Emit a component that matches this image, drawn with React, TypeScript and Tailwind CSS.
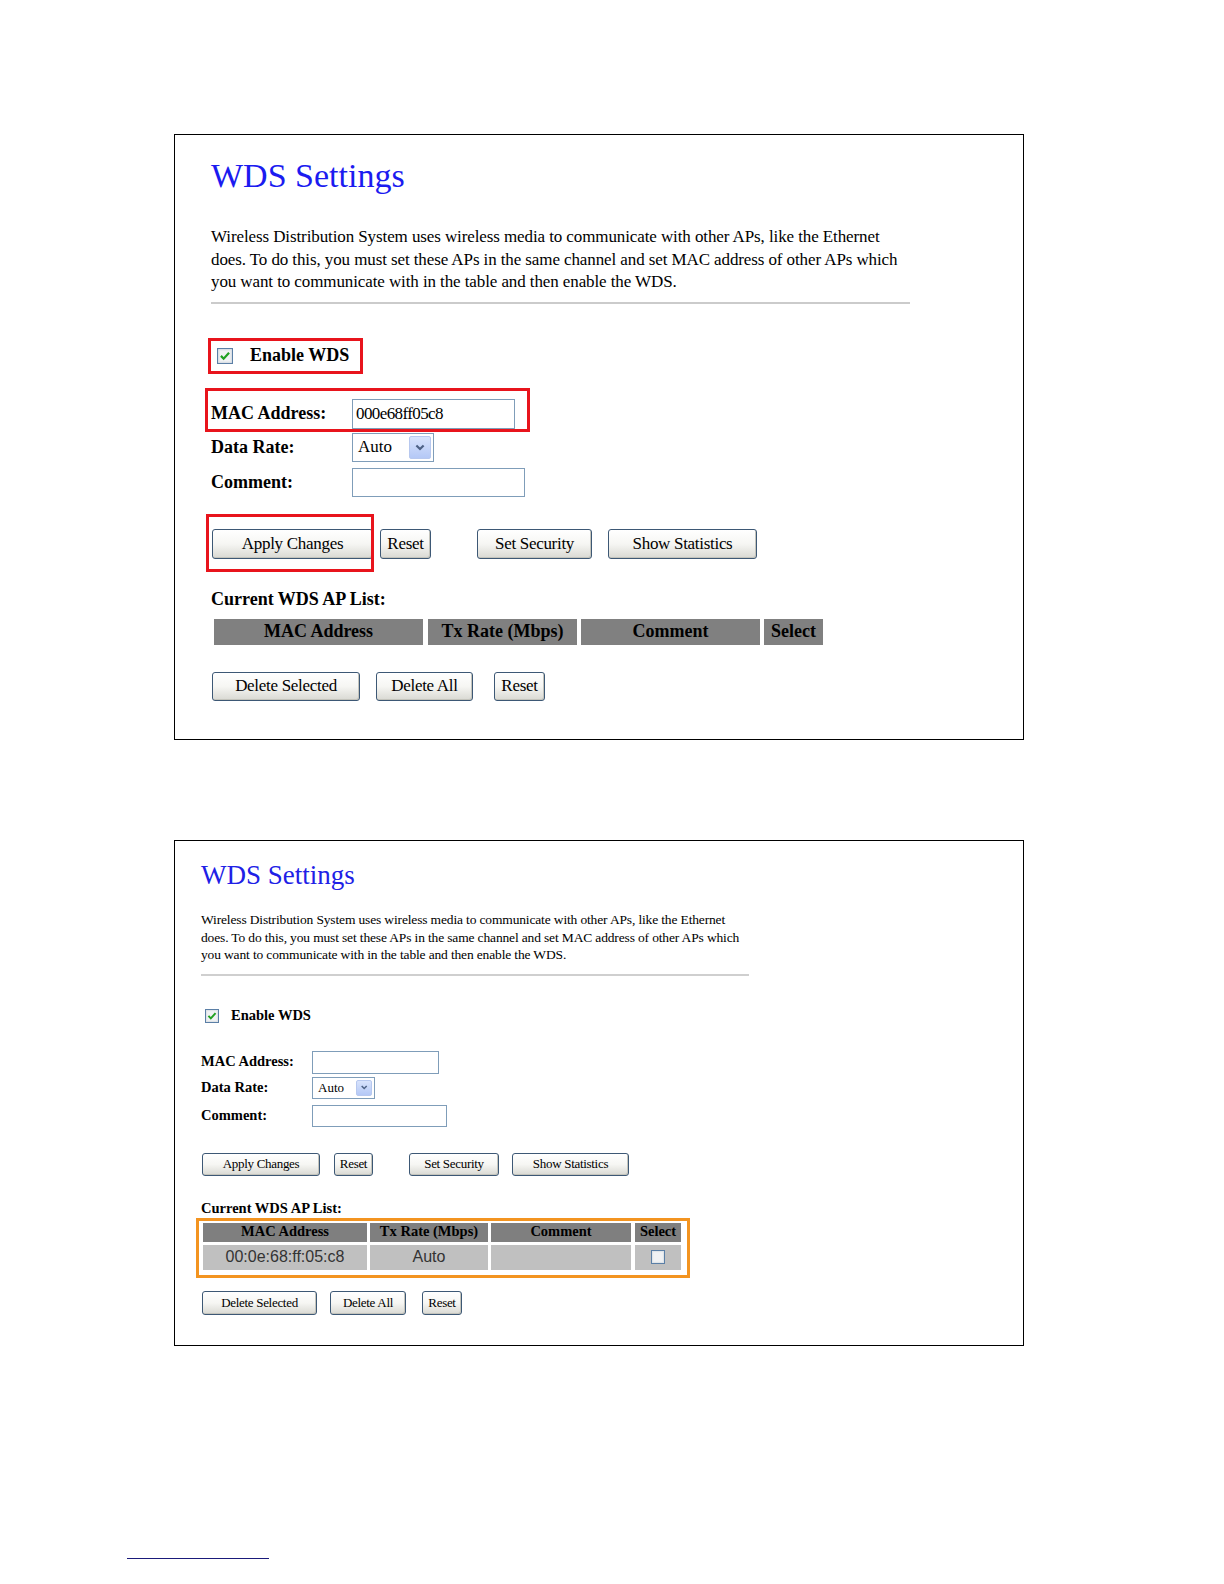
import React from "react";

const serif = "font-['Liberation_Serif','Times_New_Roman',serif]";
const sans = "font-['Liberation_Sans',Arial,sans-serif]";

function Btn({ label, className }: { label: string; className: string }) {
    return (
        <button
            className={`shrink-0 flex items-center justify-center rounded-[3px] border border-[#3d5875] bg-linear-to-b from-white via-[#f6f6f3] to-[#d9d9d3] text-black shadow-[inset_-1px_-1px_0_#c4c4bc] ${className}`}
        >
            {label}
        </button>
    );
}

function Check({ checked, className }: { checked?: boolean; className: string }) {
    return (
        <svg viewBox="0 0 13 13" className={`shrink-0 ${className}`}>
            <rect x="0.5" y="0.5" width="12" height="12" fill="#f1f2f4" stroke="#5b7fa6" />
            <rect x="1.5" y="1.5" width="10" height="10" fill="none" stroke="#dfe3e8" />
            {checked && (
                <path d="M3.2 6.4 L5.4 8.7 L9.8 3.9" fill="none" stroke="#21a121" strokeWidth="1.8" />
            )}
        </svg>
    );
}

function Select({ className, arrow, text }: { className: string; arrow: string; text: string }) {
    return (
        <div className={`flex items-stretch border border-[#7f9db9] bg-white p-[2px] ${className}`}>
            <span className={`flex-1 flex items-center pl-[3px] ${text}`}>Auto</span>
            <span className={`flex items-center justify-center rounded-[2px] border border-[#b7c8ef] bg-linear-to-b from-[#d8e3fc] to-[#b4c8f6] ${arrow}`}>
                <svg viewBox="0 0 10 10" className="w-[60%] h-[60%]">
                    <path d="M2 3.5 L5 6.5 L8 3.5" fill="none" stroke="#4d6185" strokeWidth="1.8" />
                </svg>
            </span>
        </div>
    );
}

// red / orange annotation frames drawn over the screenshot
function Mark({ className }: { className: string }) {
    return <span className={`pointer-events-none absolute ${className}`} />;
}

export default function App() {
    return (
        <div className={`min-h-[1584px] w-[1224px] bg-white overflow-hidden ${serif}`}>
            {/* ── Panel 1 (annotated) ─────────────────────────────── */}
            <div className="ml-[174px] mt-[134px] w-[850px] h-[606px] border border-black pl-[36px] pt-px">
                <h1 className="mt-[20px] text-[34px] leading-[40px] text-[#1b1bf0]">WDS Settings</h1>
                <p className="mt-[30px] text-[17px] leading-[22.5px] tracking-[-0.1px] text-black whitespace-nowrap">
                    Wireless Distribution System uses wireless media to communicate with other APs, like the Ethernet
                    <br />
                    does. To do this, you must set these APs in the same channel and set MAC address of other APs which
                    <br />
                    you want to communicate with in the table and then enable the WDS.
                </p>
                <div className="mt-[8px] w-[699px] h-[2px] bg-[#cbcbcb]" />

                <div className="relative mt-[42px] h-[20px] w-fit flex items-center">
                    <Check checked className="ml-[6px] w-[16px] h-[16px]" />
                    <span className="ml-[17px] text-[18px] font-bold">Enable WDS</span>
                    <Mark className="-left-[3px] -top-[8px] w-[155px] h-[36px] border-[3px] border-[#e8141c]" />
                </div>

                <div className="relative mt-[33px] h-[30px] w-fit flex items-center">
                    <span className="w-[141px] text-[18px] font-bold">MAC Address:</span>
                    <div className="w-[163px] h-[30px] border border-[#7f9db9] flex items-center pl-[3px] text-[17px] tracking-[-0.6px]">
                        000e68ff05c8
                    </div>
                    <Mark className="-left-[6px] -top-[11px] w-[325px] h-[44px] border-[3px] border-[#e8141c]" />
                </div>
                <div className="mt-[4px] h-[29px] flex items-center">
                    <span className="w-[141px] text-[18px] font-bold">Data Rate:</span>
                    <Select className="w-[82px] h-[29px]" arrow="w-[22px]" text="text-[17px]" />
                </div>
                <div className="mt-[6px] h-[29px] flex items-center">
                    <span className="w-[141px] text-[18px] font-bold">Comment:</span>
                    <div className="w-[173px] h-[29px] border border-[#7f9db9]" />
                </div>

                <div className="mt-[32px] ml-px h-[30px] flex items-center text-[17px] tracking-[-0.3px]">
                    <div className="relative">
                        <Btn label="Apply Changes" className="w-[161px] h-[30px]" />
                        <Mark className="-left-[6px] -top-[15px] w-[168px] h-[58px] border-[3px] border-[#e8141c]" />
                    </div>
                    <Btn label="Reset" className="ml-[7px] w-[51px] h-[30px]" />
                    <Btn label="Set Security" className="ml-[46px] w-[115px] h-[30px]" />
                    <Btn label="Show Statistics" className="ml-[16px] w-[149px] h-[30px]" />
                </div>

                <div className="mt-[29px] h-[22px] leading-[22px] text-[18px] font-bold">Current WDS AP List:</div>

                <div className="mt-[9px] ml-[3px] h-[26px] flex gap-[4px] text-[18px] font-bold">
                    <div className="w-[209px] bg-[#808080] flex items-center justify-center">MAC Address</div>
                    <div className="ml-px w-[149px] bg-[#808080] flex items-center justify-center">Tx Rate (Mbps)</div>
                    <div className="w-[179px] bg-[#808080] flex items-center justify-center">Comment</div>
                    <div className="w-[59px] bg-[#808080] flex items-center justify-center">Select</div>
                </div>

                <div className="mt-[27px] ml-px h-[29px] flex items-center text-[17px] tracking-[-0.3px]">
                    <Btn label="Delete Selected" className="w-[148px] h-[29px]" />
                    <Btn label="Delete All" className="ml-[16px] w-[97px] h-[29px]" />
                    <Btn label="Reset" className="ml-[21px] w-[51px] h-[29px]" />
                </div>
            </div>

            {/* ── Panel 2 (after adding an entry) ─────────────────── */}
            <div className="ml-[174px] mt-[100px] w-[850px] h-[506px] border border-black pl-[26px] pt-px">
                <h1 className="mt-[17px] text-[27px] leading-[32px] text-[#2020e6]">WDS Settings</h1>
                <p className="mt-[20px] text-[13.5px] leading-[17.5px] tracking-[-0.15px] text-black whitespace-nowrap">
                    Wireless Distribution System uses wireless media to communicate with other APs, like the Ethernet
                    <br />
                    does. To do this, you must set these APs in the same channel and set MAC address of other APs which
                    <br />
                    you want to communicate with in the table and then enable the WDS.
                </p>
                <div className="mt-[10px] w-[548px] h-[2px] bg-[#cfcfcf]" />

                <div className="mt-[32px] h-[16px] flex items-center">
                    <Check checked className="ml-[4px] w-[14px] h-[14px]" />
                    <span className="ml-[12px] text-[14.5px] font-bold">Enable WDS</span>
                </div>

                <div className="mt-[27px] h-[23px] flex items-center">
                    <span className="w-[111px] text-[14.5px] font-bold">MAC Address:</span>
                    <div className="w-[127px] h-[23px] border border-[#7f9db9]" />
                </div>
                <div className="mt-[3px] h-[22px] flex items-center">
                    <span className="w-[111px] text-[14.5px] font-bold">Data Rate:</span>
                    <Select className="w-[63px] h-[22px]" arrow="w-[16px]" text="text-[13px]" />
                </div>
                <div className="mt-[6px] h-[22px] flex items-center">
                    <span className="w-[111px] text-[14.5px] font-bold">Comment:</span>
                    <div className="w-[135px] h-[22px] border border-[#7f9db9]" />
                </div>

                <div className="mt-[26px] ml-px h-[23px] flex items-center text-[13px] tracking-[-0.3px]">
                    <Btn label="Apply Changes" className="w-[118px] h-[23px]" />
                    <Btn label="Reset" className="ml-[14px] w-[39px] h-[23px]" />
                    <Btn label="Set Security" className="ml-[36px] w-[90px] h-[23px]" />
                    <Btn label="Show Statistics" className="ml-[13px] w-[117px] h-[23px]" />
                </div>

                <div className="mt-[23px] h-[18px] leading-[18px] text-[14.5px] font-bold">Current WDS AP List:</div>

                <div className="relative mt-[6px] ml-[2px] w-fit">
                    <div className="h-[19px] flex gap-[3px] text-[14.5px] font-bold">
                        <div className="w-[164px] bg-[#7f7f7f] flex items-center justify-center">MAC Address</div>
                        <div className="w-[118px] bg-[#7f7f7f] flex items-center justify-center">Tx Rate (Mbps)</div>
                        <div className="w-[140px] bg-[#7f7f7f] flex items-center justify-center">Comment</div>
                        <div className="ml-px w-[46px] bg-[#7f7f7f] flex items-center justify-center">Select</div>
                    </div>
                    <div className={`mt-[3px] h-[25px] flex gap-[3px] text-[16px] text-[#333] ${sans}`}>
                        <div className="w-[164px] bg-[#c0c0c0] flex items-center justify-center">00:0e:68:ff:05:c8</div>
                        <div className="w-[118px] bg-[#c0c0c0] flex items-center justify-center">Auto</div>
                        <div className="w-[140px] bg-[#c0c0c0]" />
                        <div className="ml-px w-[46px] bg-[#c0c0c0] flex items-center justify-center">
                            <Check className="w-[14px] h-[14px]" />
                        </div>
                    </div>
                    <Mark className="-left-[7px] -top-[5px] w-[494px] h-[60px] border-[3px] border-[#f39420]" />
                </div>

                <div className="mt-[21px] ml-px h-[24px] flex items-center text-[13px] tracking-[-0.3px]">
                    <Btn label="Delete Selected" className="w-[115px] h-[24px]" />
                    <Btn label="Delete All" className="ml-[13px] w-[76px] h-[24px]" />
                    <Btn label="Reset" className="ml-[16px] w-[40px] h-[24px]" />
                </div>
            </div>

            <div className="mt-[212px] ml-[127px] w-[142px] h-px bg-[#1a1a7a]" />
        </div>
    );
}
